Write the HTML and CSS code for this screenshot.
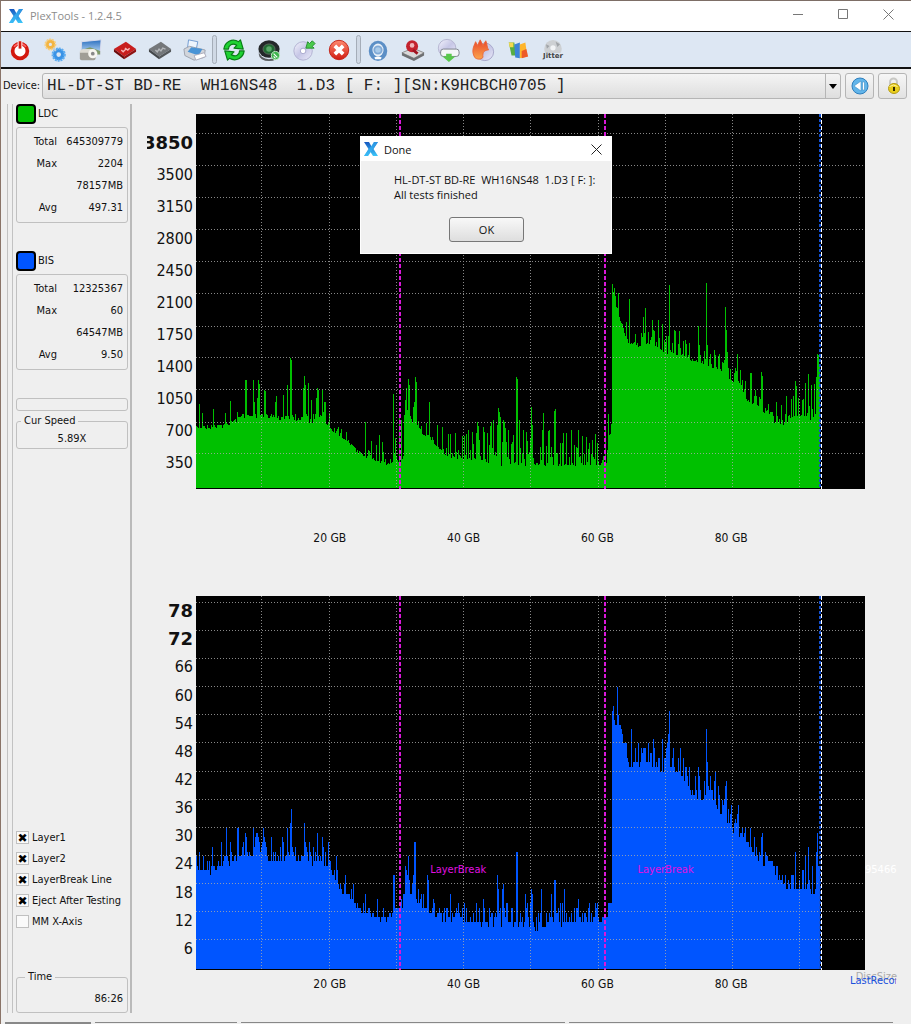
FILE: index.html
```html
<!DOCTYPE html>
<html lang="en">
<head>
<meta charset="utf-8">
<title>PlexTools - 1.2.4.5</title>
<link rel="stylesheet" href="styles.css">
</head>
<body>
<svg class="defs" aria-hidden="true">
  <defs>
    <linearGradient id="blue" x1="0" y1="0" x2="0" y2="1"><stop offset="0" stop-color="#1557c0"/><stop offset="1" stop-color="#3cc8fa"/></linearGradient>
    <linearGradient id="red" x1="0" y1="0" x2="0" y2="1"><stop offset="0" stop-color="#ff8a70"/><stop offset="1" stop-color="#d01a10"/></linearGradient>
    <linearGradient id="disc" x1="0" y1="0" x2="1" y2="1"><stop offset="0" stop-color="#f4f4fc"/><stop offset=".5" stop-color="#c6c6e6"/><stop offset="1" stop-color="#ececfa"/></linearGradient>
    <linearGradient id="fire" x1="0" y1="0" x2="0" y2="1"><stop offset="0" stop-color="#e8442a"/><stop offset="1" stop-color="#fba54c"/></linearGradient>
    <linearGradient id="sky" x1="0" y1="0" x2="0" y2="1"><stop offset="0" stop-color="#2a6fc0"/><stop offset="1" stop-color="#cfe6fa"/></linearGradient>
    <symbol id="logo" viewBox="0 0 16 16"><path d="M1 1h5l2.500 4.500L11 1h4l-4.500 7 4.500 7h-5l-2.500-4L5 15H1l4.500-7z" fill="url(#blue)"/><path d="M11 1h4L5 15H1z" fill="#39b5f5" opacity=".65"/></symbol>
  </defs>
</svg>

<div class="window">
  <header class="titlebar">
    <svg class="logo"><use href="#logo"/></svg>
    <span class="title">PlexTools - 1.2.4.5</span>
    <div class="controls">
      <button aria-label="Minimize"><svg viewBox="0 0 11 11"><path d="M0 5.500h10"/></svg></button>
      <button aria-label="Maximize"><svg viewBox="0 0 11 11"><path d="M.5.5h9v9h-9z"/></svg></button>
      <button aria-label="Close"><svg viewBox="0 0 11 11"><path d="M.5.5l10 10M10.500.5l-10 10"/></svg></button>
    </div>
  </header>

  <nav class="toolbar">
    <button aria-label="Power"><svg viewBox="0 0 26 26"><circle cx="13" cy="14" r="8" fill="#fff" stroke="#d3190f" stroke-width="4"/><path d="M6.500 9.500a8 8 0 0 1 13 0" fill="none" stroke="#f66" stroke-width="1.500"/><path d="M13 3.500v8" stroke="#fff" stroke-width="5"/><path d="M13 3.500v8" stroke="#d3190f" stroke-width="3"/></svg></button>
    <button aria-label="Settings"><svg viewBox="0 0 26 26"><g fill="none"><circle cx="8" cy="7" r="3.500" stroke="#f2b544" stroke-width="3.500"/><circle cx="8" cy="7" r="5.500" stroke="#f7cf80" stroke-width="2" stroke-dasharray="2 1"/><circle cx="17" cy="18" r="4.500" stroke="#3a93e6" stroke-width="4"/><circle cx="17" cy="18" r="6.500" stroke="#5fadf0" stroke-width="2.500" stroke-dasharray="2 1"/><path d="M11 11l3 3" stroke="#bcd" stroke-width="2"/></g></svg></button>
    <button aria-label="Screenshot"><svg viewBox="0 0 26 26"><path d="M4 4l21-2-1 16H3z" fill="url(#sky)" stroke="#dde"/><path d="M4 13l9-3 11 4v4H4z" fill="#7f9a6a"/><rect x="2" y="14" width="17" height="10" rx="2" fill="#a09e96"/><path d="M2 16h16v-2l-4-2H5l-3 2z" fill="#dcdad2"/><circle cx="16" cy="17" r="5" fill="#f7f6f0"/><circle cx="16" cy="17" r="2" fill="#888"/></svg></button>
    <button aria-label="Save bitmap"><svg viewBox="0 0 26 26"><path d="M1 12L14 4l11 8-13 8z" fill="#c81e1e"/><path d="M1 12v3l11 8v-3z" fill="#6b0c0c"/><path d="M12 20l13-8v3l-13 8z" fill="#8f1414"/><path d="M9 13l2 2 3-3-1-1 3 2 2-2" fill="none" stroke="#f6b4b4" stroke-width="1.500"/></svg></button>
    <button aria-label="Save file"><svg viewBox="0 0 26 26"><path d="M1 12L14 4l11 8-13 8z" fill="#74777a"/><path d="M1 12v3l11 8v-3z" fill="#44474a"/><path d="M12 20l13-8v3l-13 8z" fill="#55585b"/><path d="M8 13l2 2 2-3 2 2 2-3 3 1" fill="none" stroke="#b4b7ba" stroke-width="1.500"/></svg></button>
    <button aria-label="Print"><svg viewBox="0 0 26 26"><path d="M6 2l10 2-2 10-9-4z" fill="#eef5fd" stroke="#6d98cf"/><path d="M1 12l6-3 17 4-1 8-11 3-10-5z" fill="#d2d5db" stroke="#9a9faa"/><path d="M9 10l12 2-4 7-12-4z" fill="#4a94d6"/><path d="M12 19l11-3 2 4-11 4z" fill="#fff" stroke="#aab"/></svg></button>
    <i class="sep"></i>
    <button aria-label="Refresh"><svg viewBox="0 0 26 26"><g fill="#1fd232" stroke="#087d16" stroke-width="1.300" stroke-linejoin="round"><path d="M2 12C3 4 11 0 18 4l2-2 3 10-10-1 3-3C11 5 7 8 7 12z"/><path d="M24 14c-1 8-9 12-16 8l-2 2-3-10 10 1-3 3c5 3 9 0 9-4z"/></g></svg></button>
    <button aria-label="Start test"><svg viewBox="0 0 26 26"><path d="M2 14a11 9 0 0 0 22 0v4a11 7 0 0 1-22 0z" fill="#5a5d60"/><ellipse cx="13" cy="12" rx="11.500" ry="9.500" fill="#24282a"/><ellipse cx="13" cy="12" rx="6.500" ry="5.500" fill="#206b32" stroke="#5c6a60"/><circle cx="13" cy="12" r="3" fill="#58a868"/><circle cx="20" cy="19" r="4.500" fill="#3db34c" stroke="#c5efc9"/><path d="M18 17l4 4M18 20l2 2" stroke="#fff" stroke-width="1.200"/></svg></button>
    <button aria-label="Load disc"><svg viewBox="0 0 26 26"><circle cx="12" cy="14" r="10" fill="url(#disc)" stroke="#b0b0d0"/><circle cx="12" cy="14" r="3" fill="#fff" stroke="#a6a6cc"/><path d="M15 11l2-7 2 2 3-3 3 3-3 3 2 2z" fill="#49c94c" stroke="#258c2c"/></svg></button>
    <button aria-label="Stop"><svg viewBox="0 0 26 26"><circle cx="13" cy="13" r="10.500" fill="url(#red)" stroke="#c22014"/><path d="M8.500 8.500l9 9m0-9l-9 9" stroke="#fff" stroke-width="4"/></svg></button>
    <i class="sep"></i>
    <button aria-label="Disc info"><svg viewBox="0 0 26 26"><ellipse cx="13" cy="14" rx="10" ry="11" fill="#5b8fc6"/><ellipse cx="13" cy="13" rx="6" ry="7" fill="#e8f0f8"/><circle cx="13" cy="13" r="4" fill="#a9cbea" stroke="#7fa9d6" stroke-width="2"/><path d="M9 21q4-2 8 0l-1 2h-6z" fill="#fff"/></svg></button>
    <button aria-label="Drive"><svg viewBox="0 0 26 26"><path d="M1 16l12-5 12 5-11 6z" fill="#d9d9d9" stroke="#888"/><path d="M1 16v3l13 6v-3zM25 16v3l-11 6v-3z" fill="#6e7072"/><circle cx="12" cy="9" r="6.500" fill="#c3222d"/><circle cx="12" cy="8" r="2.500" fill="#f1b5b8"/><path d="M13 13l5 4" stroke="#a01420" stroke-width="3"/></svg></button>
    <button aria-label="Read test"><svg viewBox="0 0 26 26"><circle cx="12" cy="11" r="9.500" fill="url(#disc)" stroke="#b4b4d0"/><rect x="5" y="12" width="20" height="8" rx="3" fill="#f4f6f8" stroke="#777d88"/><path d="M11 17h6v3h4l-7 6-7-6h4z" fill="#58c84c"/></svg></button>
    <button aria-label="Burn test"><svg viewBox="0 0 26 26"><circle cx="15" cy="15" r="9.500" fill="url(#disc)" stroke="#a4a4c8"/><path d="M4 21C0 14 3 9 5 4l2 4 3-6 3 6 3-5c2 4 1 7 3 10-4 0-7 2-6 8-3 3-7 2-9 0z" fill="url(#fire)" stroke="#e9663a"/></svg></button>
    <button aria-label="Quality graph"><svg viewBox="0 0 26 26"><path d="M3 5h6l2 14H6z" fill="#57ad42"/><path d="M9 7l6-2v17l-5-1z" fill="#3c83d8"/><path d="M15 7l6-2 2 15-8 2z" fill="#ffb52a"/><path d="M17 14l5-2 2 8-7 2z" fill="#ed5a28"/><path d="M3 5h5v5H4z" fill="#f4d84e"/></svg></button>
    <button class="jitter"><svg viewBox="0 0 26 16"><circle cx="13" cy="11" r="10" fill="#cdd0d3"/><circle cx="13" cy="10" r="3" fill="#f2f4f6"/><path d="M16 3l5 3-3 3zM5 6l4 2-3 3z" fill="#a0a4a8"/></svg><span>Jitter</span></button>
  </nav>

  <div class="device">
    <label for="device">Device:</label>
    <div class="combo">
      <select id="device"><option>HL-DT-ST BD-RE&nbsp; WH16NS48&nbsp; 1.D3 [ F: ][SN:K9HCBCH0705 ]</option></select>
      <svg viewBox="0 0 8 5"><path d="M0 0h8L4 5z"/></svg>
    </div>
    <button aria-label="Play"><svg viewBox="0 0 18 18"><circle cx="9" cy="9" r="8" fill="#62b5ea" stroke="#2f7fbd"/><path d="M3 9l7-5v10zM11.500 5h2v8h-2z" fill="#fff" stroke="#3f8ec8" stroke-width=".6"/></svg></button>
    <button aria-label="Lock"><svg viewBox="0 0 18 18"><path d="M6 9V5a3.500 3.500 0 0 1 7 0v4" fill="none" stroke="#c8c8c4" stroke-width="2"/><ellipse cx="10" cy="11.500" rx="5.500" ry="5" fill="#e9ce1c" stroke="#b39a14"/><path d="M5.500 9.500q4-3 8 0" stroke="#fff6a0" fill="none"/><path d="M10 10v4" stroke="#332a00" stroke-width="2"/></svg></button>
  </div>

  <div class="work">
    <aside class="side">
      <div class="legend"><i class="swatch ldc"></i>LDC</div>
      <dl class="box stats">
        <dt>Total</dt><dd>645309779</dd>
        <dt>Max</dt><dd>2204</dd>
        <dd class="at">78157MB</dd>
        <dt>Avg</dt><dd>497.31</dd>
      </dl>
      <div class="legend second"><i class="swatch bis"></i>BIS</div>
      <dl class="box stats">
        <dt>Total</dt><dd>12325367</dd>
        <dt>Max</dt><dd>60</dd>
        <dd class="at">64547MB</dd>
        <dt>Avg</dt><dd>9.50</dd>
      </dl>
      <div class="box progress"></div>
      <fieldset class="box speed"><legend>Cur Speed</legend>5.89X</fieldset>
      <div class="checks">
        <label><input type="checkbox" checked>Layer1</label>
        <label><input type="checkbox" checked>Layer2</label>
        <label><input type="checkbox" checked>LayerBreak Line</label>
        <label><input type="checkbox" checked>Eject After Testing</label>
        <label><input type="checkbox">MM X-Axis</label>
      </div>
      <fieldset class="box time"><legend>Time</legend>86:26</fieldset>
    </aside>

    <main class="charts">
      <section class="chart top">
        <ol class="yaxis">
          <li class="strong">3850</li><li>3500</li><li>3150</li><li>2800</li><li>2450</li><li>2100</li><li>1750</li><li>1400</li><li>1050</li><li>700</li><li>350</li>
        </ol>
        <div class="plot"><svg id="ldc" viewBox="196 114 669 375" preserveAspectRatio="none"></svg></div>
        <ol class="xaxis"><li>20 GB</li><li>40 GB</li><li>60 GB</li><li>80 GB</li></ol>
      </section>
      <section class="chart bottom">
        <ol class="yaxis">
          <li class="strong">78</li><li class="strong">72</li><li>66</li><li>60</li><li>54</li><li>48</li><li>42</li><li>36</li><li>30</li><li>24</li><li>18</li><li>12</li><li>6</li>
        </ol>
        <div class="plot">
          <svg id="bis" viewBox="196 596 669 374" preserveAspectRatio="none"></svg>
          <span class="mark first">LayerBreak</span>
          <span class="mark last">LayerBreak</span>
          <span class="size-value">95466</span>
          <span class="size-name">DiscSize</span>
          <span class="recorded">LastRecorded</span>
        </div>
        <ol class="xaxis"><li>20 GB</li><li>40 GB</li><li>60 GB</li><li>80 GB</li></ol>
      </section>
    </main>
  </div>

  <footer class="status"><i></i><i></i><i></i><i></i></footer>

  <div class="dialog" role="dialog" aria-labelledby="done">
    <header>
      <svg class="logo"><use href="#logo"/></svg>
      <span id="done">Done</span>
      <button aria-label="Close dialog"><svg viewBox="0 0 11 11"><path d="M.5.5l10 10M10.500.5l-10 10"/></svg></button>
    </header>
    <p>HL-DT-ST BD-RE&nbsp; WH16NS48&nbsp; 1.D3 [ F: ]:<br>All tests finished</p>
    <button class="ok">OK</button>
  </div>
</div>
<script src="chart.js"></script>
</body>
</html>
```
FILE: styles.css
```css
* { box-sizing: border-box; }
body {
  margin: 0;
  background: #efefef;
  color: #111;
  font: 11px/16px "DejaVu Sans Condensed", "DejaVu Sans", sans-serif;
}
button { padding: 0; border: 0; background: none; color: inherit; font: inherit; }
ol, dl, dd, p { margin: 0; padding: 0; list-style: none; }
.defs { position: absolute; width: 0; height: 0; }
.window {
  position: relative;
  display: flex;
  flex-direction: column;
  min-height: 100vh;
  border-top: 1px solid #7d6e66;
  border-left: 1px solid #8a7468;
}
.logo { width: 16px; height: 16px; }

.titlebar {
  display: flex;
  align-items: center;
  gap: 6px;
  height: 30px;
  padding-left: 7px;
  background: #fff;
  color: #8c8c8c;
  font: 11px/16px "Open Sans", "Noto Sans", sans-serif;
}
.controls { display: flex; margin-left: auto; }
.controls button { width: 45px; height: 28px; }
.controls svg, .dialog header button svg { width: 11px; height: 11px; fill: none; stroke: #777; overflow: visible; }

.toolbar {
  display: flex;
  align-items: center;
  gap: 9px;
  height: 38px;
  padding: 0 6px;
  border-top: 1px solid #111;
  border-bottom: 2px solid #111;
  background: #dde7f3;
}
.toolbar button { width: 26px; height: 26px; }
.toolbar svg { display: block; width: 26px; height: 24px; }
.sep { width: 5px; height: 29px; margin: 0 -5px; border: 1px solid #a5adb8; border-radius: 3px; background: #d0d9e5; }
.toolbar .jitter svg { height: 14px; }
.jitter span { display: block; font: bold 7px/7px "DejaVu Sans", sans-serif; color: #444; }

.device { display: flex; align-items: center; gap: 4px; height: 35px; padding: 0 4px 2px 2px; }
.device label { width: 35px; white-space: nowrap; }
.combo { position: relative; flex: 1; height: 26px; }
.combo select {
  width: 100%;
  height: 26px;
  padding: 0 20px 0 4px;
  appearance: none;
  border: 1px solid #b5b5b5;
  border-radius: 3px;
  background: linear-gradient(#f4f4f4, #dedede);
  color: #222;
  font: 16px/22px "Liberation Mono", monospace;
}
.combo svg { position: absolute; right: 4px; top: 11px; width: 8px; height: 5px; }
.combo::after { content: ""; position: absolute; right: 15px; top: 1px; bottom: 1px; border-left: 1px solid #b5b5b5; }
.device button { width: 29px; height: 26px; border: 1px solid #b5b5b5; border-radius: 3px; background: linear-gradient(#f6f6f6, #e2e2e2); }
.device button svg { display: block; width: 18px; height: 18px; margin: auto; }

.work { display: flex; flex: 1; }
.side {
  display: flex;
  flex-direction: column;
  width: 125px;
  margin: 0 0 9px 6px;
  padding: 0 2px 0 8px;
  border-left: 1px solid #c2c2c2;
  border-right: 2px solid #bababa;
  background: linear-gradient(#c2c2c2, #c2c2c2) 4px 0 / 1px 100% no-repeat;
}
.legend { display: flex; align-items: center; gap: 2px; height: 20px; }
.second { margin-top: 28px; }
.swatch { width: 20px; height: 20px; border: 2px solid #000; border-radius: 4px; }
.swatch.ldc { background: #00c000; }
.swatch.bis { background: #0055ff; }
.box { margin: 0; border: 1px solid #c0c0c0; border-radius: 3px; }
.stats {
  display: grid;
  grid-template-columns: 40px 1fr;
  grid-auto-rows: 22px;
  align-items: center;
  margin-top: 3px;
  padding: 3px 4px 3px 0;
}
.stats dt, .stats dd { text-align: right; white-space: nowrap; }
.stats .at { grid-column: 2; }
.progress { height: 13px; margin-top: 28px; }
.speed { height: 35px; margin-top: 3px; padding: 0; text-align: center; line-height: 22px; }
fieldset legend { margin-left: 4px; padding: 0 3px; text-align: left; line-height: 14px; }
.checks { margin-top: auto; }
.checks label { display: flex; align-items: center; gap: 3px; height: 21px; white-space: nowrap; }
.checks input { display: grid; place-items: center; flex: none; appearance: none; width: 13px; height: 13px; margin: 0; border: 1px solid #c0c0c0; background: #fafafa; }
.checks input:checked::before { content: "✖"; color: #000; font: 12px/12px "DejaVu Sans", sans-serif; }
.time { height: 43px; margin-top: 38px; padding: 0 4px; text-align: right; line-height: 30px; }

.charts { display: flex; flex: 1; flex-direction: column; padding: 10px 46px 0 15px; }
.chart { display: grid; flex: 1; grid-template-columns: 49px 1fr; }
.top { grid-template-rows: 1fr 107px; }
.bottom { grid-template-rows: 1fr 52px; flex: 0 0 auto; }
.yaxis { display: flex; flex-direction: column; overflow: hidden; padding-right: 3px; font-size: 16px; }
.yaxis li { display: flex; flex: 1; align-items: center; justify-content: flex-end; }
.top .yaxis { padding-top: 13px; padding-bottom: 10px; }
.bottom .yaxis { height: 374px; padding-top: 1px; padding-bottom: 7px; }
.yaxis .strong { font: bold 18px/20px "DejaVu Sans", sans-serif; }
.plot { position: relative; background: #000; }
.plot svg { display: block; position: absolute; width: 100%; height: 100%; }
.xaxis { display: grid; grid-column: 2; grid-template-columns: repeat(4, 2fr) 1fr; padding-left: 10%; text-align: center; font-size: 12px; }
.top .xaxis { padding-top: 41px; }
.bottom .xaxis { padding-top: 6px; }
.mark, .size-value, .size-name, .recorded { position: absolute; white-space: nowrap; line-height: 14px; }
.mark { top: 267px; color: #e010e0; }
.mark.first { left: 35%; }
.mark.last { left: 66%; }
.size-value { left: 100%; top: 267px; color: #fff; }
.size-name { right: -32px; bottom: -14px; color: #aaa; }
.recorded { right: -31px; bottom: -18px; width: 46px; overflow: hidden; color: #1a50dc; }

.status { display: flex; gap: 4px; height: 2px; padding: 0 18px 0 4px; }
.status i { height: 2px; border-top: 1px solid #888; flex: 1 1 320px; }
.status i:first-child { flex: 0 0 86px; border-top-width: 2px; }
.status i:nth-child(2) { flex: 0 0 142px; }

.dialog {
  position: absolute;
  top: 135px;
  left: 359px;
  width: 252px;
  height: 118px;
  border: 1px solid #fff;
  background: #f0f0f0;
  font: 11px/15px "Open Sans", "Noto Sans", sans-serif;
}
.dialog header { display: flex; align-items: center; gap: 5px; height: 24px; padding: 0 9px 0 2px; background: #fff; }
.dialog header button { margin-left: auto; line-height: 0; }
.dialog header button svg { stroke: #222; }
.dialog p { margin: 11px 0 0 33px; white-space: nowrap; }
.ok { display: block; width: 75px; height: 25px; margin: 15px auto 0 88px; border: 1px solid #777; border-radius: 3px; background: linear-gradient(#f8f8f8, #dedede); }
```
FILE: chart.js
```js
const LDC = {
  id: 'ldc', color: '#00c000', bottom: 488, step: 1,
  rows: [133, 165, 197, 229, 261, 293, 326, 357, 389, 422, 453],
  floor: [[196,427],[207,426],[222,425],[229,423],[236,419],[242,415],[270,415],[280,417],[286,416],[292,419],[305,417],[310,421],[315,418],[322,416],[327,423],[333,429],[340,434],[348,441],[356,449],[363,454],[372,458],[388,463],[392,462],[396,455],[400,463],[403,455],[404,415],[408,412],[412,420],[417,423],[422,432],[430,436],[437,445],[445,453],[455,458],[480,457],[494,463],[607,463],[608,433],[611,432],[612,284],[614,300],[616,305],[619,315],[622,325],[625,336],[628,341],[635,344],[645,343],[655,345],[662,350],[684,354],[690,358],[706,362],[711,367],[724,369],[730,378],[738,381],[745,396],[753,404],[760,404],[765,415],[773,421],[783,424],[792,414],[806,414],[810,420],[817,410],[818,375],[820,390]],
  spikes: [[199,404],[202,413],[213,409],[225,413],[230,401],[237,412],[245,380],[246,380],[253,380],[254,402],[257,398],[258,380],[259,384],[264,390],[265,391],[275,402],[276,396],[283,395],[287,385],[290,358],[291,360],[303,388],[304,376],[305,385],[308,383],[311,400],[316,398],[317,388],[318,390],[322,390],[324,402],[325,402],[329,413],[338,427],[341,429],[346,432],[365,422],[371,441],[376,445],[379,435],[382,442],[393,394],[395,438],[399,417],[401,420],[405,400],[406,388],[408,379],[409,385],[413,407],[414,402],[415,377],[416,382],[426,423],[429,402],[437,425],[442,427],[448,434],[450,434],[455,433],[462,436],[464,436],[466,434],[468,430],[472,432],[477,422],[478,426],[483,427],[484,432],[487,433],[490,426],[491,422],[493,420],[497,425],[498,408],[499,412],[500,417],[503,420],[504,422],[505,428],[508,430],[513,435],[516,377],[517,379],[519,420],[523,430],[526,432],[531,407],[532,425],[542,430],[543,413],[548,431],[549,430],[554,411],[555,409],[563,433],[566,433],[571,430],[578,430],[582,436],[586,437],[592,440],[595,434],[605,430],[608,428],[612,284],[613,292],[614,288],[615,296],[618,293],[626,322],[629,299],[643,317],[645,308],[652,320],[658,320],[662,324],[668,336],[669,285],[674,330],[675,331],[679,331],[685,340],[698,326],[699,345],[706,283],[707,345],[714,350],[719,354],[725,307],[726,330],[727,352],[737,354],[740,370],[745,381],[750,373],[751,373],[755,390],[761,372],[762,376],[768,404],[776,402],[781,405],[786,396],[795,381],[796,386],[798,398],[802,400],[805,383],[808,374],[811,385],[814,384],[817,354],[816,377]],
  noise: [[196,4,.6],[290,9,.5],[327,6,.5],[350,3,.5],[362,13,.3],[392,8,.5],[403,8,.4],[437,12,.4],[463,28,.7],[534,3,.3],[540,28,.65],[558,24,.55],[612,4,.3],[632,20,.6],[665,18,.55],[710,16,.6],[745,18,.5],[765,12,.5],[790,24,.55]]
};

const BIS = {
  id: 'bis', color: '#0055ff', bottom: 969, step: 4.7,
  rows: [602, 630, 658, 686, 714, 742, 771, 799, 827, 855, 883, 911, 939],
  floor: [[196,868],[205,868],[214,872],[222,863],[235,860],[245,855],[258,852],[270,858],[280,860],[290,856],[300,858],[325,863],[332,870],[340,888],[348,895],[356,905],[362,910],[375,915],[385,919],[391,918],[396,905],[402,905],[406,882],[411,895],[415,898],[420,903],[430,910],[440,920],[480,922],[530,924],[537,930],[545,922],[600,921],[607,915],[608,900],[611,902],[612,710],[615,722],[620,722],[624,752],[630,764],[650,760],[658,772],[668,770],[680,771],[690,790],[700,798],[712,798],[722,814],[730,824],[737,834],[748,842],[757,857],[765,864],[775,875],[785,885],[805,887],[813,894],[820,880]],
  spikes: [[199,850],[212,845],[221,841],[226,826],[230,842],[237,826],[238,827],[245,831],[246,836],[253,826],[256,831],[257,831],[263,826],[264,836],[271,836],[282,836],[283,841],[287,827],[290,822],[291,807],[304,822],[305,841],[309,842],[317,831],[322,836],[328,843],[336,855],[345,873],[353,884],[365,892],[377,898],[393,873],[394,877],[405,865],[406,870],[408,855],[413,875],[414,841],[415,842],[427,877],[428,882],[433,897],[450,895],[483,897],[497,877],[498,890],[502,887],[503,883],[507,902],[516,850],[517,852],[525,893],[531,888],[532,892],[541,887],[551,893],[554,880],[555,878],[564,888],[578,897],[595,902],[613,705],[617,686],[618,717],[631,728],[638,742],[653,737],[662,737],[667,742],[668,733],[669,709],[673,746],[680,747],[698,766],[706,728],[707,760],[715,771],[725,785],[726,780],[731,806],[737,812],[738,803],[750,826],[754,836],[761,836],[762,832],[795,850],[802,870],[805,855],[808,845],[812,865],[816,852],[817,831]],
  noise: [[196,18,.65],[245,18,.65],[327,15,.6],[352,14,.6],[402,15,.6],[440,24,.65],[545,20,.65],[600,2,.3],[612,5,.4],[624,26,.65],[690,26,.65],[730,18,.6],[765,16,.6],[800,24,.5]]
};

const COLUMNS = [261, 329, 396, 463, 530, 598, 665, 732, 799];

function lastBefore(list, x) {
  return list.reduce((found, item) => item[0] <= x ? item : found, list[0]);
}

function floorAt(floor, x) {
  const i = floor.findIndex(point => point[0] > x);
  if (i < 1) return floor[floor.length - 1][1];
  const [x0, y0] = floor[i - 1];
  const [x1, y1] = floor[i];
  return y0 + (y1 - y0) * (x - x0) / (x1 - x0);
}

function line(x1, y1, x2, y2, color, dash, width) {
  return `<path d="M${x1} ${y1}L${x2} ${y2}" stroke="${color}" stroke-dasharray="${dash}" stroke-width="${width}"/>`;
}

function draw(chart) {
  const svg = document.getElementById(chart.id);
  const { x, y, width, height } = svg.viewBox.baseVal;
  const peaks = new Map(chart.spikes);
  let seed = 7;
  const random = () => (seed = seed * 16807 % 2147483647) / 2147483647;
  let area = `M${x} ${chart.bottom}`;
  for (let column = x; column < 820; column++) {
    const [, amount, density] = lastBefore(chart.noise, column);
    const chance = random();
    const size = random();
    let level = floorAt(chart.floor, column) + size * 3;
    if (chance < density) level -= size * amount;
    if (peaks.has(column)) level = Math.min(level, peaks.get(column));
    level = Math.round(chart.bottom - Math.round((chart.bottom - level) / chart.step) * chart.step);
    area += `V${level}H${column + 1}`;
  }
  area += `V${chart.bottom}Z`;
  const end = y + height;
  svg.innerHTML =
    `<path d="${area}" fill="${chart.color}" shape-rendering="crispEdges"/>` +
    '<g fill="none" shape-rendering="crispEdges"><g opacity=".8">' +
    chart.rows.map(row => line(x, row + .5, x + width, row + .5, '#aaa', '1 2', 1)).join('') +
    COLUMNS.map(column => line(column + .5, y, column + .5, end, '#aaa', '1 2', 1)).join('') + '</g>' +
    [399, 604].map(column => line(column + .5, y, column + .5, end, '#d818d8', '4 2', 2)).join('') +
    line(820, y, 820, end, '#1450d0', '3 2', 2) +
    line(821.5, y, 821.5, end, '#fff', '4 2', 1) + '</g>';
}

draw(LDC);
draw(BIS);
```
